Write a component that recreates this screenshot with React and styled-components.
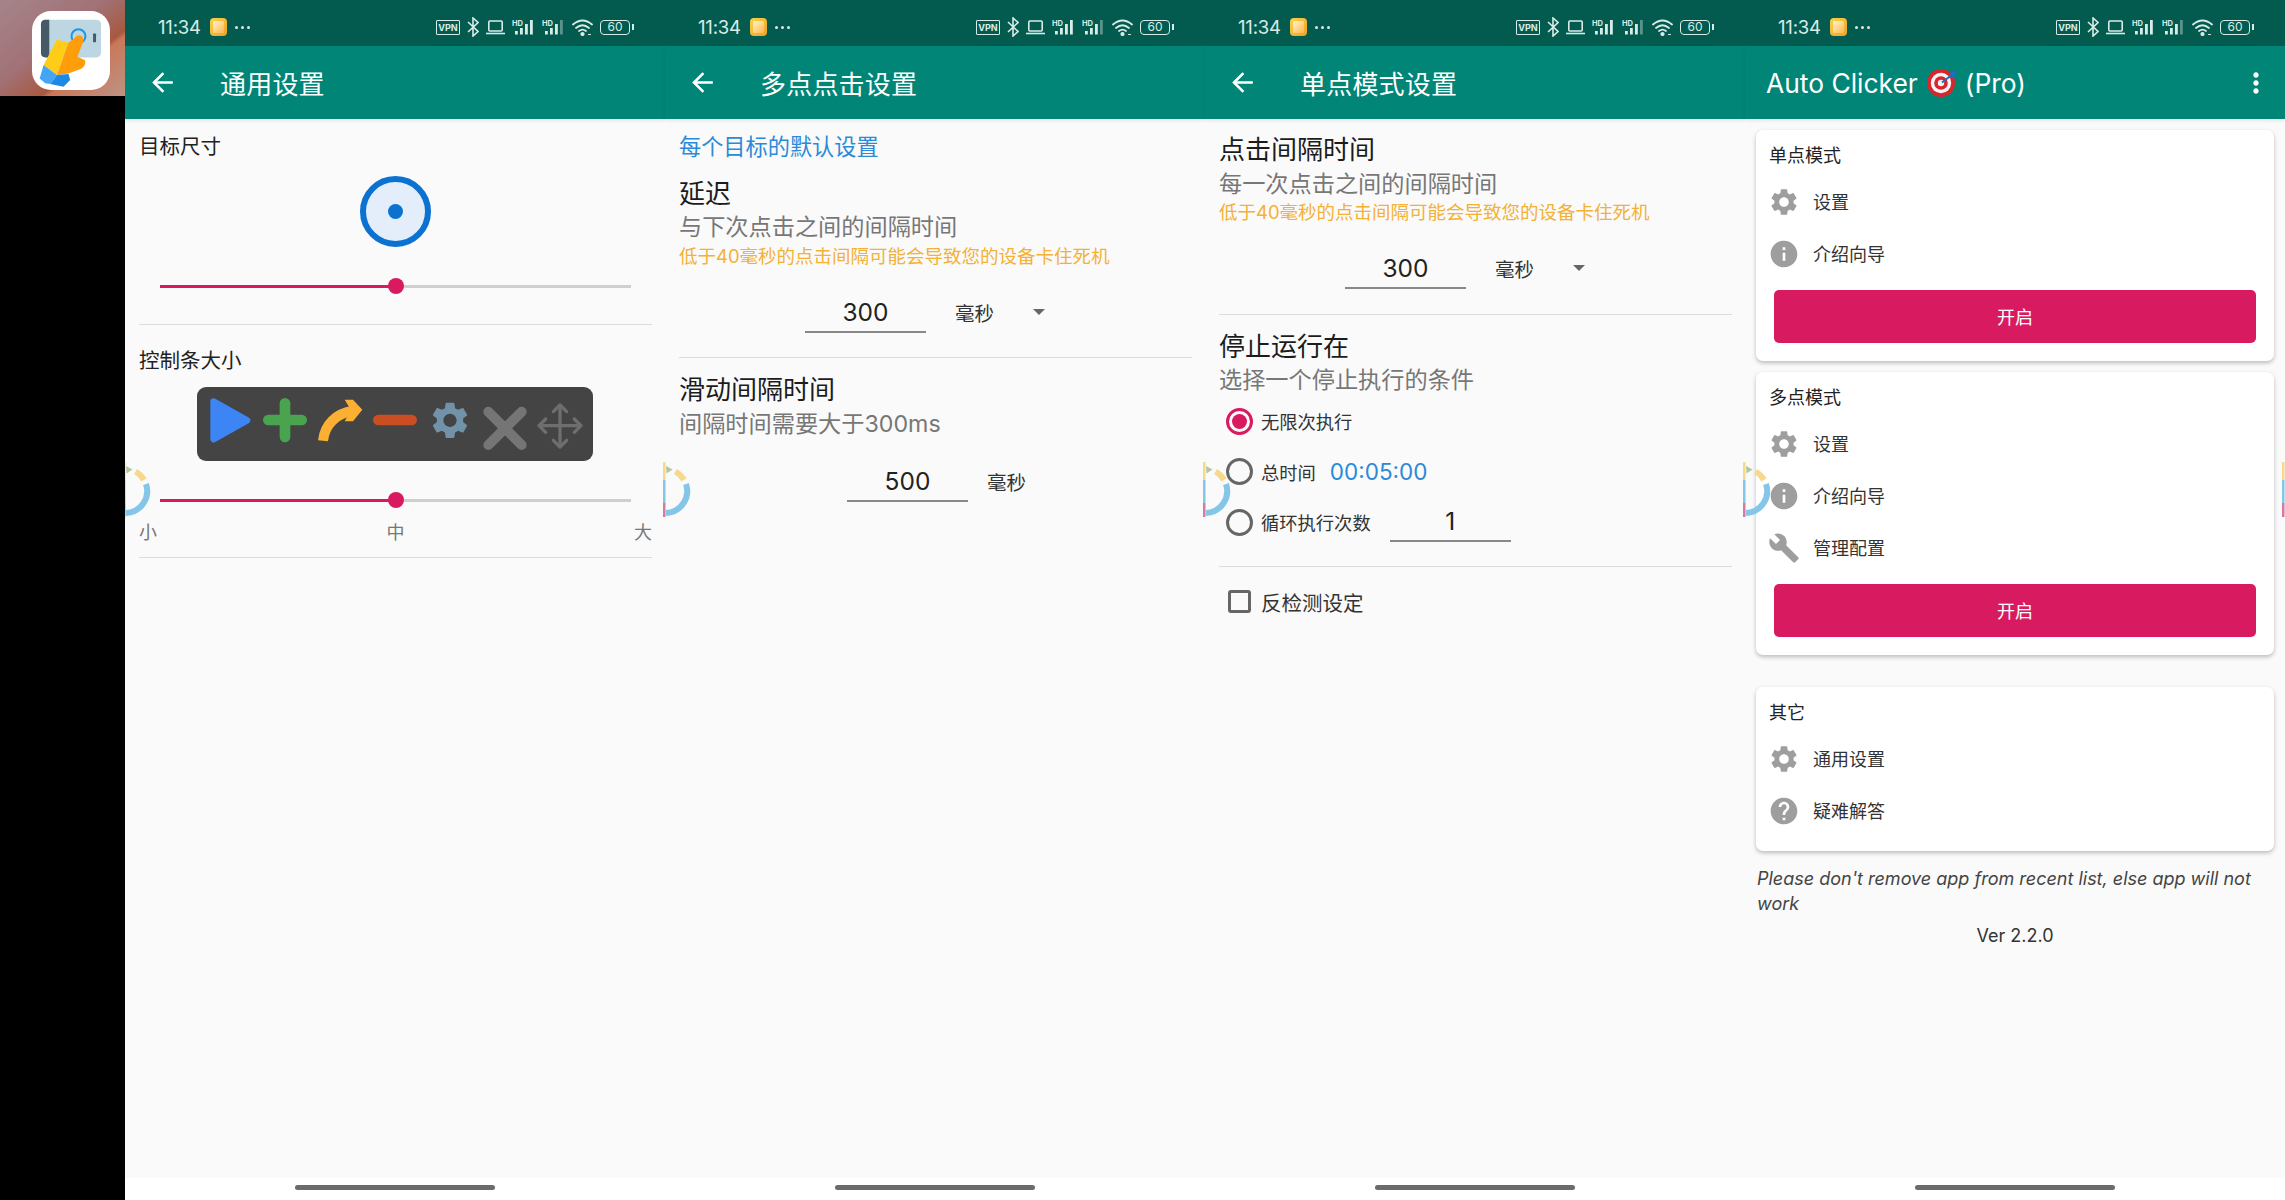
import React from 'react'
import styled, { createGlobalStyle } from 'styled-components'
import { MdArrowBack, MdMoreVert, MdSettings, MdInfo, MdBuild, MdHelp } from 'react-icons/md'

const GlobalStyle = createGlobalStyle`
  html, body {
    margin: 0;
    padding: 0;
    background: #000;
    font-family: Inter, "Noto Sans CJK SC", sans-serif;
  }
  * { box-sizing: border-box; }
`

const Screens = styled.div`
  display: grid;
  grid-template-columns: 125px repeat(4, 540px);
  width: 2285px;
  height: 1200px;
  overflow: hidden;
`

const LeftColumn = styled.div`
  position: relative;
  z-index: 2;
  background: #000;
`

const WallpaperTile = styled.div`
  height: 96px;
  padding: 11px 0 0 32px;
  background: linear-gradient(142deg, #a58489 0%, #a17277 42%, #a8593f 66%, #c9785a 69%, #bd9384 100%);
`

const AppIcon = styled.div`
  width: 78px;
  height: 79px;
  border-radius: 19px;
  background: #fff;
  overflow: hidden;
  svg { display: block; }
`

const Phone = styled.div`
  position: relative;
  display: flex;
  flex-direction: column;
  height: 1200px;
  background: #fafafa;
`

const StatusBar = styled.div`
  display: flex;
  align-items: center;
  justify-content: space-between;
  flex: none;
  height: 46px;
  padding: 8px 32px 0 33px;
  background: #035b4f;
  color: #d9ebe7;
`

const StatusLeft = styled.div`
  display: flex;
  align-items: center;
`

const Clock = styled.span`
  font-size: 18.5px;
  letter-spacing: -0.2px;
`

const NotifyIcon = styled.span`
  display: block;
  width: 17px;
  height: 18px;
  margin-left: 9px;
  border-radius: 4px;
  background: linear-gradient(135deg, #f9d34f, #f0a11f);
  padding: 3px;
  &::after {
    content: '';
    display: block;
    width: 100%;
    height: 100%;
    border-radius: 1px;
    background: linear-gradient(135deg, #fff3cf, #ffb84a);
  }
`

const SmallDots = styled.span`
  display: flex;
  gap: 3px;
  margin-left: 8px;
  i {
    display: block;
    width: 3px;
    height: 3px;
    border-radius: 50%;
    background: #d9ebe7;
  }
`

const StatusRight = styled.div`
  display: flex;
  align-items: center;
  gap: 7px;
  svg { display: block; flex: none; }
`

const VpnBox = styled.span`
  display: flex;
  align-items: center;
  justify-content: center;
  width: 24px;
  height: 15px;
  border: 1.5px solid #d9ebe7;
  border-radius: 1px;
  font-size: 9px;
  font-weight: 700;
  line-height: 1;
`

const Battery = styled.span`
  position: relative;
  display: flex;
  align-items: center;
  justify-content: center;
  width: 30px;
  height: 15px;
  margin-right: 3px;
  border: 1.5px solid #d9ebe7;
  border-radius: 4px;
  font-size: 12px;
  line-height: 1;
  &::after {
    content: '';
    position: absolute;
    right: -5px;
    top: 3px;
    width: 2px;
    height: 6px;
    background: #d9ebe7;
  }
`

const Toolbar = styled.div`
  display: flex;
  align-items: center;
  flex: none;
  height: 73px;
  padding: 0 13px 0 22px;
  background: #008577;
  color: #fff;
  box-shadow: 0 2px 3px rgba(0, 0, 0, 0.08);
`

const BackButton = styled(MdArrowBack)`
  flex: none;
  margin-right: 42px;
`

const ToolbarTitle = styled.span`
  font-size: 26px;
  letter-spacing: 0.2px;
  padding-bottom: 1px;
`

const AppTitle = styled.div`
  display: flex;
  align-items: center;
  flex: 1;
  margin-left: -1px;
  padding-top: 1px;
  font-size: 26.4px;
  svg { margin: 0 8px 0 9px; }
`

const Panel = styled.div`
  flex: 1;
  padding: 0 13px 0 14px;
  color: #222;
`

const CardsPanel = styled.div`
  flex: 1;
  padding: 0 11px;
`

const NavBar = styled.div`
  display: flex;
  justify-content: center;
  flex: none;
  height: 22px;
  padding-top: 7px;
  background: #fff;
  &::after {
    content: '';
    width: 200px;
    height: 5px;
    border-radius: 3px;
    background: #6b6b6b;
  }
`

const FloatingBall = styled.svg`
  position: absolute;
  left: ${(p) => (p.$edge === 'right' ? '537px' : '-2px')};
  top: 462px;
  z-index: 1;
  pointer-events: none;
`

const SectionLabel = styled.div`
  margin-top: ${(p) => p.$top}px;
  font-size: 20.5px;
  line-height: 24px;
`

const TargetCircle = styled.div`
  display: flex;
  align-items: center;
  justify-content: center;
  width: 71px;
  height: 71px;
  margin: 17px auto 0;
  border: 6px solid #0b72d2;
  border-radius: 50%;
  background: #e4eefa;
  &::after {
    content: '';
    width: 15px;
    height: 15px;
    border-radius: 50%;
    background: #0b72d2;
  }
`

const SliderTrack = styled.div`
  position: relative;
  height: 3px;
  margin: ${(p) => p.$top}px 21px 0;
  background: #cfcfcf;
`

const SliderFill = styled.div`
  height: 100%;
  background: #d81b60;
`

const SliderThumb = styled.div`
  position: absolute;
  top: -7px;
  width: 16px;
  height: 16px;
  margin-left: -8px;
  border-radius: 50%;
  background: #d81b60;
`

const Divider = styled.div`
  height: 1px;
  margin-top: ${(p) => p.$top}px;
  background: #dcdcdc;
`

const ControlBar = styled.div`
  width: 396px;
  height: 74px;
  margin: 14px 0 0 58px;
  border-radius: 9px;
  background: #444;
  svg { display: block; }
`

const TickRow = styled.div`
  display: flex;
  justify-content: space-between;
  margin-top: 19px;
  font-size: 18px;
  line-height: 24px;
  color: #777;
`

const BlueHeading = styled.div`
  margin-top: 13px;
  font-size: 22.2px;
  line-height: 30px;
  color: #2a8ad8;
`

const Heading = styled.div`
  margin-top: ${(p) => p.$top}px;
  font-size: 26px;
  line-height: 34px;
  color: #1c1c1c;
`

const Description = styled.div`
  margin-top: ${(p) => p.$top}px;
  font-size: 23.2px;
  line-height: 28px;
  color: #777;
`

const Warning = styled.div`
  margin-top: ${(p) => p.$top}px;
  font-size: 18.5px;
  line-height: 24px;
  color: #f3b136;
`

const InputRow = styled.div`
  display: flex;
  align-items: center;
  margin-top: ${(p) => p.$top}px;
  padding-left: ${(p) => p.$indent}px;
`

const NumberField = styled.div`
  width: 121px;
  height: 40px;
  border-bottom: 2px solid #888;
  font-size: 24.5px;
  line-height: 38px;
  text-align: center;
  color: #222;
`

const Unit = styled.span`
  margin: 0 0 2px ${(p) => p.$gap}px;
  font-size: 19.5px;
  color: #333;
`

const Caret = styled.span`
  width: 0;
  height: 0;
  margin: 0 0 2px 39px;
  border-left: 6.5px solid transparent;
  border-right: 6.5px solid transparent;
  border-top: 6.5px solid #666;
`

const RadioList = styled.div`
  margin-top: 2px;
  padding-left: 7px;
`

const RadioRow = styled.div`
  display: flex;
  align-items: center;
  height: 50.5px;
  font-size: 18.3px;
  color: #333;
`

const Radio = styled.span`
  display: flex;
  align-items: center;
  justify-content: center;
  flex: none;
  width: 27px;
  height: 27px;
  margin-right: 8px;
  border: 3px solid ${(p) => (p.$on ? '#d81b60' : '#666')};
  border-radius: 50%;
  &::after {
    content: '';
    display: ${(p) => (p.$on ? 'block' : 'none')};
    width: 15px;
    height: 15px;
    border-radius: 50%;
    background: #d81b60;
  }
`

const TimeValue = styled.span`
  margin-left: 14px;
  font-size: 22.5px;
  color: #2a8ad8;
`

const LoopField = styled(NumberField)`
  margin-left: 19px;
`

const CheckRow = styled.div`
  display: flex;
  align-items: center;
  height: 48px;
  margin-top: 11px;
  padding-left: 9px;
  font-size: 20.5px;
  color: #333;
`

const CheckBox = styled.span`
  flex: none;
  width: 23px;
  height: 23px;
  margin-right: 10px;
  border: 3px solid #666;
  border-radius: 3px;
`

const Card = styled.div`
  margin-top: ${(p) => p.$top}px;
  padding: 14px 0 ${(p) => p.$bottom}px;
  border-radius: 7px;
  background: #fff;
  box-shadow: 0 2px 4px rgba(0, 0, 0, 0.25);
`

const CardTitle = styled.div`
  margin-bottom: 8px;
  padding-left: 13px;
  font-size: 18px;
  line-height: 24px;
  color: #222;
`

const CardRow = styled.div`
  display: flex;
  align-items: center;
  gap: 13px;
  height: 52px;
  padding: 0 0 2px 12px;
  font-size: 18px;
  color: #333;
  svg { flex: none; margin-top: 2px; color: #9e9e9e; }
`

const StartButton = styled.div`
  display: flex;
  align-items: center;
  justify-content: center;
  height: 53px;
  margin: 10px 18px 0;
  padding-bottom: 2px;
  border-radius: 5px;
  background: #d81b60;
  font-size: 18px;
  color: #fff;
`

const Note = styled.div`
  margin-top: 15px;
  padding-left: 1px;
  font-size: 18px;
  font-style: italic;
  line-height: 25px;
  color: #444;
`

const Version = styled.div`
  margin-top: 8px;
  font-size: 18px;
  line-height: 24px;
  text-align: center;
  color: #333;
`

const GEAR =
  'M19.14 12.94c.04-.3.06-.61.06-.94 0-.32-.02-.64-.07-.94l2.03-1.58c.18-.14.23-.41.12-.61l-1.92-3.32c-.12-.22-.37-.29-.59-.22l-2.39.96c-.5-.38-1.03-.7-1.62-.94l-.36-2.54c-.04-.24-.24-.41-.48-.41h-3.84c-.24 0-.43.17-.47.41l-.36 2.54c-.59.24-1.13.57-1.62.94l-2.39-.96c-.22-.08-.47 0-.59.22L2.74 8.87c-.12.21-.08.47.12.61l2.03 1.58c-.05.3-.09.63-.09.94s.02.64.07.94l-2.03 1.58c-.18.14-.23.41-.12.61l1.92 3.32c.12.22.37.29.59.22l2.39-.96c.5.38 1.03.7 1.62.94l.36 2.54c.05.24.24.41.48.41h3.84c.24 0 .44-.17.47-.41l.36-2.54c.59-.24 1.13-.56 1.62-.94l2.39.96c.22.08.47 0 .59-.22l1.92-3.32c.12-.22.07-.47-.12-.61l-2.01-1.58zM12 15.6c-1.98 0-3.6-1.62-3.6-3.6s1.62-3.6 3.6-3.6 3.6 1.62 3.6 3.6-1.62 3.6-3.6 3.6z'

const SignalIcon = ({ dimLast }) => (
  <svg width="23" height="16" viewBox="0 0 23 16" fill="#d9ebe7">
    <text x="0" y="6.5" fontSize="7.5" fontWeight="700" fontFamily="Inter, sans-serif">HD</text>
    <rect x="3" y="12" width="2.8" height="3.5" />
    <rect x="8" y="9" width="2.8" height="6.5" />
    <rect x="13" y="5" width="2.8" height="10.5" />
    <rect x="18" y="1" width="2.8" height="14.5" opacity={dimLast ? 0.4 : 1} />
  </svg>
)

const StatusIcons = () => (
  <StatusRight>
    <VpnBox>VPN</VpnBox>
    <svg width="12" height="20" viewBox="0 0 12 20" fill="none" stroke="#d9ebe7" strokeWidth="1.6">
      <polyline points="1,5 11,14.5 6,19 6,1 11,5.5 1,15" />
    </svg>
    <svg width="19" height="15" viewBox="0 0 19 15" fill="none" stroke="#d9ebe7" strokeWidth="1.6">
      <rect x="2.8" y="1" width="13.4" height="10" rx="1" />
      <line x1="0" y1="13.5" x2="19" y2="13.5" />
    </svg>
    <SignalIcon />
    <SignalIcon dimLast />
    <svg width="21" height="17" viewBox="0 0 21 17" fill="none" stroke="#d9ebe7" strokeWidth="1.8" strokeLinecap="round">
      <path d="M1 5.5Q10.5 -2.5 20 5.5" />
      <path d="M4 9Q10.5 3.5 17 9" />
      <path d="M7 12Q10.5 9.4 14 12" />
      <circle cx="10.5" cy="15" r="1.2" fill="#d9ebe7" />
      <path d="M16.5 15.5h2" strokeWidth="1.2" />
    </svg>
    <Battery>60</Battery>
  </StatusRight>
)

const PhoneStatus = () => (
  <StatusBar>
    <StatusLeft>
      <Clock>11:34</Clock>
      <NotifyIcon />
      <SmallDots><i /><i /><i /></SmallDots>
    </StatusLeft>
    <StatusIcons />
  </StatusBar>
)

// the assistive touch ball peeking in from the screen edge
const Ball = ({ edge }) => (
  <FloatingBall $edge={edge} width="28" height="56" viewBox="0 0 28 56" fill="none">
    <rect x="0" y="0" width="2.5" height="18" fill="#f6d98b" />
    <rect x="0" y="18" width="2.5" height="23" fill="#85c6e8" />
    <rect x="0" y="41" width="2.5" height="14" fill="#d87aa0" />
    <path d="M3 4l6.5 3.5-6 4z" fill="#b3c79a" />
    <path d="M12.5 9.5A22 22 0 0 1 21 18" stroke="#f6d98b" strokeWidth="6" />
    <path d="M23 22A22 22 0 0 1 3 51" stroke="#85c6e8" strokeWidth="6" />
  </FloatingBall>
)

const SettingsSlider = ({ top, value }) => (
  <SliderTrack $top={top}>
    <SliderFill style={{ width: `${value}%` }} />
    <SliderThumb style={{ left: `${value}%` }} />
  </SliderTrack>
)

const ControlBarIcons = () => (
  <svg width="396" height="74" viewBox="22 22 1188 222">
    <path d="M72 66L172 122L72 178Z" fill="#3d85f5" stroke="#3d85f5" strokeWidth="20" strokeLinejoin="round" />
    <rect x="220" y="105" width="132" height="32" rx="16" fill="#4aa44f" />
    <rect x="270" y="55" width="32" height="133" rx="16" fill="#4aa44f" />
    <path d="M400 183C405 135 440 100 490 94" fill="none" stroke="#fbb034" strokeWidth="30" />
    <path d="M465 60L490 60L518 90L490 125L465 125L484 92Z" fill="#fbb034" />
    <rect x="550" y="105" width="132" height="32" rx="16" fill="#cb4e23" />
    <path d={GEAR} transform="translate(715 56) scale(5.5)" fill="#7192a8" />
    <path d="M896 96L996 196M996 96L896 196" stroke="#757575" strokeWidth="30" strokeLinecap="round" />
    <g fill="none" stroke="#6e6e6e" strokeWidth="10" strokeLinecap="round" strokeLinejoin="round">
      <path d="M1111 78V200M1050 138H1172" />
      <path d="M1091 96L1111 76L1131 96M1091 182L1111 202L1131 182" />
      <path d="M1068 118L1048 138L1068 158M1154 118L1174 138L1154 158" />
    </g>
  </svg>
)

const TapperLogo = () => (
  <svg width="78" height="79" viewBox="95 32 235 238">
    <rect x="122" y="58" width="181" height="114" rx="14" fill="#bcd6e2" />
    <path d="M147 58V172H136Q122 172 122 158V72Q122 58 136 58Z" fill="#455a64" />
    <circle cx="235" cy="108" r="21" fill="none" stroke="#1e96e6" strokeWidth="6" />
    <rect x="279" y="100" width="9" height="26" rx="2" fill="#455a64" />
    <path d="M170 118L205 128L170 225L130 195Z" fill="#ffcc17" />
    <path d="M205 128L222 115Q232 100 245 108Q254 116 248 128L232 170L255 180Q258 195 245 205L205 220L170 225Z" fill="#ff9d0a" />
    <path d="M130 195L170 225L150 252L135 250L118 235Z" fill="#42a5f5" />
    <path d="M170 225L205 222L210 240L190 260L150 252Z" fill="#1e88e5" />
  </svg>
)

const TargetEmoji = () => (
  <svg width="30" height="28" viewBox="0 0 30 28">
    <circle cx="14" cy="14" r="14" fill="#d8262c" />
    <circle cx="14" cy="14" r="10.2" fill="#f5f5f5" />
    <circle cx="14" cy="14" r="6.8" fill="#d8262c" />
    <circle cx="14" cy="14" r="3.2" fill="#f5f5f5" />
    <path d="M15 13.5L26 5" stroke="#1d6fc4" strokeWidth="2" />
    <path d="M23 4L29 0.5L28 6L30 7L25 9Z" fill="#1d6fc4" />
  </svg>
)

const GeneralSettings = () => (
  <Panel>
    <SectionLabel $top={16}>目标尺寸</SectionLabel>
    <TargetCircle />
    <SettingsSlider top={38} value={50} />
    <Divider $top={36} />
    <SectionLabel $top={24}>控制条大小</SectionLabel>
    <ControlBar>
      <ControlBarIcons />
    </ControlBar>
    <SettingsSlider top={38} value={50} />
    <TickRow>
      <span>小</span>
      <span>中</span>
      <span>大</span>
    </TickRow>
    <Divider $top={12} />
  </Panel>
)

const MultiSettings = () => (
  <Panel>
    <BlueHeading>每个目标的默认设置</BlueHeading>
    <Heading $top={15}>延迟</Heading>
    <Description $top={2}>与下次点击之间的间隔时间</Description>
    <Warning $top={3}>低于40毫秒的点击间隔可能会导致您的设备卡住死机</Warning>
    <InputRow $top={25} $indent={126}>
      <NumberField>300</NumberField>
      <Unit $gap={29}>毫秒</Unit>
      <Caret />
    </InputRow>
    <Divider $top={24} />
    <Heading $top={15}>滑动间隔时间</Heading>
    <Description $top={3}>间隔时间需要大于300ms</Description>
    <InputRow $top={24} $indent={168}>
      <NumberField>500</NumberField>
      <Unit $gap={19}>毫秒</Unit>
    </InputRow>
  </Panel>
)

const SingleSettings = () => (
  <Panel>
    <Heading $top={14}>点击间隔时间</Heading>
    <Description $top={3}>每一次点击之间的间隔时间</Description>
    <Warning $top={2}>低于40毫秒的点击间隔可能会导致您的设备卡住死机</Warning>
    <InputRow $top={25} $indent={126}>
      <NumberField>300</NumberField>
      <Unit $gap={29}>毫秒</Unit>
      <Caret />
    </InputRow>
    <Divider $top={25} />
    <Heading $top={15}>停止运行在</Heading>
    <Description $top={2}>选择一个停止执行的条件</Description>
    <RadioList>
      <RadioRow>
        <Radio $on />
        无限次执行
      </RadioRow>
      <RadioRow>
        <Radio />
        总时间
        <TimeValue>00:05:00</TimeValue>
      </RadioRow>
      <RadioRow>
        <Radio />
        循环执行次数
        <LoopField>1</LoopField>
      </RadioRow>
    </RadioList>
    <Divider $top={18} />
    <CheckRow>
      <CheckBox />
      反检测设定
    </CheckRow>
  </Panel>
)

const HomeScreen = () => (
  <CardsPanel>
    <Card $top={11} $bottom={18}>
      <CardTitle>单点模式</CardTitle>
      <CardRow><MdSettings size={32} />设置</CardRow>
      <CardRow><MdInfo size={32} />介绍向导</CardRow>
      <StartButton>开启</StartButton>
    </Card>
    <Card $top={11} $bottom={18}>
      <CardTitle>多点模式</CardTitle>
      <CardRow><MdSettings size={32} />设置</CardRow>
      <CardRow><MdInfo size={32} />介绍向导</CardRow>
      <CardRow><MdBuild size={32} />管理配置</CardRow>
      <StartButton>开启</StartButton>
    </Card>
    <Card $top={32} $bottom={14}>
      <CardTitle>其它</CardTitle>
      <CardRow><MdSettings size={32} />通用设置</CardRow>
      <CardRow><MdHelp size={32} />疑难解答</CardRow>
    </Card>
    <Note>Please don't remove app from recent list, else app will not work</Note>
    <Version>Ver 2.2.0</Version>
  </CardsPanel>
)

const App = () => (
  <>
    <GlobalStyle />
    <Screens>
      <LeftColumn>
        <WallpaperTile>
          <AppIcon>
            <TapperLogo />
          </AppIcon>
        </WallpaperTile>
      </LeftColumn>

      <Phone>
        <PhoneStatus />
        <Toolbar>
          <BackButton size={31} />
          <ToolbarTitle>通用设置</ToolbarTitle>
        </Toolbar>
        <GeneralSettings />
        <NavBar />
        <Ball />
      </Phone>

      <Phone>
        <PhoneStatus />
        <Toolbar>
          <BackButton size={31} />
          <ToolbarTitle>多点点击设置</ToolbarTitle>
        </Toolbar>
        <MultiSettings />
        <NavBar />
        <Ball />
      </Phone>

      <Phone>
        <PhoneStatus />
        <Toolbar>
          <BackButton size={31} />
          <ToolbarTitle>单点模式设置</ToolbarTitle>
        </Toolbar>
        <SingleSettings />
        <NavBar />
        <Ball />
      </Phone>

      <Phone>
        <PhoneStatus />
        <Toolbar>
          <AppTitle>
            Auto Clicker
            <TargetEmoji />
            (Pro)
          </AppTitle>
          <MdMoreVert size={32} />
        </Toolbar>
        <HomeScreen />
        <NavBar />
        <Ball />
        <Ball edge="right" />
      </Phone>
    </Screens>
  </>
)

export default App
